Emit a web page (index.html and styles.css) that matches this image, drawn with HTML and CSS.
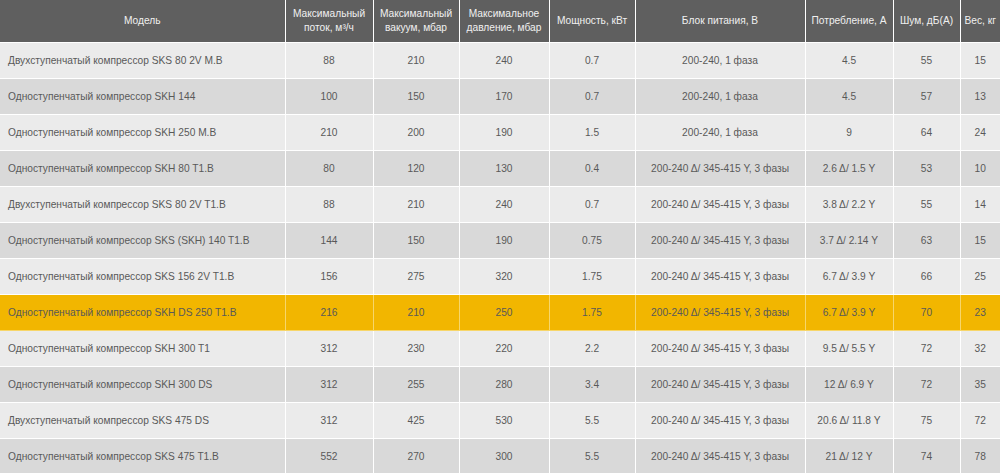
FILE: index.html
```html
<!DOCTYPE html>
<html lang="ru">
<head>
<meta charset="utf-8">
<link rel="stylesheet" href="styles.css">
</head>
<body>
<table class="spec">
<colgroup>
<col class="c-model"><col class="c-flow"><col class="c-vac"><col class="c-press"><col class="c-pow"><col class="c-psu"><col class="c-amp"><col class="c-noise"><col class="c-wt">
</colgroup>
<thead>
<tr>
<th>Модель</th>
<th>Максимальный<br>поток, м³/ч</th>
<th>Максимальный<br>вакуум, мбар</th>
<th>Максимальное<br>давление, мбар</th>
<th>Мощность, кВт</th>
<th>Блок питания, В</th>
<th>Потребление, А</th>
<th>Шум, дБ(А)</th>
<th>Вес, кг</th>
</tr>
</thead>
<tbody>
<tr><td>Двухступенчатый компрессор SKS 80 2V M.B</td><td>88</td><td>210</td><td>240</td><td>0.7</td><td>200-240, 1 фаза</td><td>4.5</td><td>55</td><td>15</td></tr>
<tr><td>Одноступенчатый компрессор SKH 144</td><td>100</td><td>150</td><td>170</td><td>0.7</td><td>200-240, 1 фаза</td><td>4.5</td><td>57</td><td>13</td></tr>
<tr><td>Одноступенчатый компрессор SKH 250 M.B</td><td>210</td><td>200</td><td>190</td><td>1.5</td><td>200-240, 1 фаза</td><td>9</td><td>64</td><td>24</td></tr>
<tr><td>Одноступенчатый компрессор SKH 80 T1.B</td><td>80</td><td>120</td><td>130</td><td>0.4</td><td>200-240 Δ/ 345-415 Y, 3 фазы</td><td>2.6 Δ/ 1.5 Y</td><td>53</td><td>10</td></tr>
<tr><td>Двухступенчатый компрессор SKS 80 2V T1.B</td><td>88</td><td>210</td><td>240</td><td>0.7</td><td>200-240 Δ/ 345-415 Y, 3 фазы</td><td>3.8 Δ/ 2.2 Y</td><td>55</td><td>14</td></tr>
<tr><td>Одноступенчатый компрессор SKS (SKH) 140 T1.B</td><td>144</td><td>150</td><td>190</td><td>0.75</td><td>200-240 Δ/ 345-415 Y, 3 фазы</td><td>3.7 Δ/ 2.14 Y</td><td>63</td><td>15</td></tr>
<tr><td>Одноступенчатый компрессор SKS 156 2V T1.B</td><td>156</td><td>275</td><td>320</td><td>1.75</td><td>200-240 Δ/ 345-415 Y, 3 фазы</td><td>6.7 Δ/ 3.9 Y</td><td>66</td><td>25</td></tr>
<tr class="hl"><td>Одноступенчатый компрессор SKH DS 250 T1.B</td><td>216</td><td>210</td><td>250</td><td>1.75</td><td>200-240 Δ/ 345-415 Y, 3 фазы</td><td>6.7 Δ/ 3.9 Y</td><td>70</td><td>23</td></tr>
<tr><td>Одноступенчатый компрессор SKH 300 T1</td><td>312</td><td>230</td><td>220</td><td>2.2</td><td>200-240 Δ/ 345-415 Y, 3 фазы</td><td>9.5 Δ/ 5.5 Y</td><td>72</td><td>32</td></tr>
<tr><td>Одноступенчатый компрессор SKH 300 DS</td><td>312</td><td>255</td><td>280</td><td>3.4</td><td>200-240 Δ/ 345-415 Y, 3 фазы</td><td>12 Δ/ 6.9 Y</td><td>72</td><td>35</td></tr>
<tr><td>Двухступенчатый компрессор SKS 475 DS</td><td>312</td><td>425</td><td>530</td><td>5.5</td><td>200-240 Δ/ 345-415 Y, 3 фазы</td><td>20.6 Δ/ 11.8 Y</td><td>75</td><td>72</td></tr>
<tr><td>Одноступенчатый компрессор SKS 475 T1.B</td><td>552</td><td>270</td><td>300</td><td>5.5</td><td>200-240 Δ/ 345-415 Y, 3 фазы</td><td>21 Δ/ 12 Y</td><td>74</td><td>78</td></tr>
</tbody>
</table>
</body>
</html>
```
FILE: styles.css
```css
html, body {
  margin: 0;
  padding: 0;
  background: #ffffff;
}
body {
  font-family: "Liberation Sans", Arial, sans-serif;
  font-size: 10.2px;
  color: #595959;
  overflow: hidden;
}
.spec {
  width: 1000px;
  table-layout: fixed;
  border-collapse: collapse;
}
.c-model { width: 285px; }
.c-flow { width: 88px; }
.c-vac { width: 86px; }
.c-press { width: 90px; }
.c-pow { width: 86px; }
.c-psu { width: 170px; }
.c-amp { width: 88px; }
.c-noise { width: 67px; }
.c-wt { width: 40px; }
.spec th,
.spec td {
  border: 1px solid #ffffff;
  padding: 0 2px;
  text-align: center;
  vertical-align: middle;
  white-space: nowrap;
  overflow: hidden;
}
.spec th {
  background: #5f5f5f;
  color: #f0f0f0;
  font-weight: normal;
  height: 42px;
  line-height: 14px;
}
.spec th:first-child { border-left: 0; }
.spec td:first-child { border-left: 0; }
.spec tr > :last-child { border-right: 0; }
.spec thead th { border-top: 0; }
.spec td {
  height: 35px;
  line-height: 14px;
}
.spec td:first-child {
  text-align: left;
  padding-left: 8px;
}
.spec tbody tr:nth-child(odd) td { background: #ebebeb; }
.spec tbody tr:nth-child(even) td { background: #d9d9d9; }
.spec tbody tr.hl td {
  background: #f2b600;
  border-color: #f7d66a;
}
```
